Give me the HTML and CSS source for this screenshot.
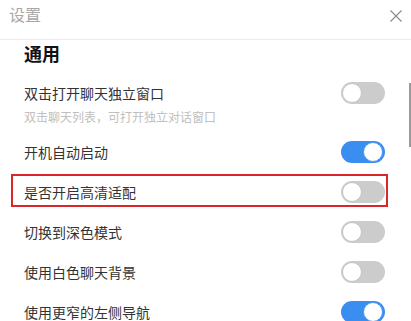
FILE: index.html
```html
<!DOCTYPE html>
<html lang="zh-CN">
<head>
<meta charset="utf-8">
<title>设置</title>
<link rel="stylesheet" href="styles.css">
</head>
<body>
<div class="window">
  <header class="header">
    <span class="header-title">设置</span>
    <svg class="close" width="12" height="12" viewBox="0 0 12 12"><path d="M0.5 0.5 L11.5 11.5 M11.5 0.5 L0.5 11.5" stroke="#8a8a8a" stroke-width="1.1" fill="none"/></svg>
  </header>
  <main class="content">
    <h2 class="section-title">通用</h2>
    <div class="row row-first">
      <div class="row-text">
        <div class="label">双击打开聊天独立窗口</div>
        <div class="hint">双击聊天列表，可打开独立对话窗口</div>
      </div>
      <span class="toggle"></span>
    </div>
    <div class="row">
      <div class="label">开机自动启动</div>
      <span class="toggle on"></span>
    </div>
    <div class="row highlighted">
      <div class="label">是否开启高清适配</div>
      <span class="toggle"></span>
    </div>
    <div class="row">
      <div class="label">切换到深色模式</div>
      <span class="toggle"></span>
    </div>
    <div class="row">
      <div class="label">使用白色聊天背景</div>
      <span class="toggle"></span>
    </div>
    <div class="row">
      <div class="label">使用更窄的左侧导航</div>
      <span class="toggle on"></span>
    </div>
  </main>
  <div class="scroll-thumb"></div>
</div>
</body>
</html>
```
FILE: styles.css
```css
html, body {
  margin: 0;
  padding: 0;
  background: #ffffff;
}
body {
  font-family: "Noto Sans CJK SC", "Noto Sans", sans-serif;
  color: #333333;
  overflow: hidden;
}
.window {
  position: relative;
  width: 411px;
  height: 321px;
  overflow: hidden;
}
.header {
  height: 39px;
  border-bottom: 1px solid #ebebeb;
  display: flex;
  justify-content: space-between;
  align-items: flex-start;
  padding: 0 9px 0 9px;
  box-sizing: content-box;
}
.header-title {
  font-size: 16px;
  line-height: 28px;
  color: #a8a8a8;
}
.close {
  margin-top: 10px;
  margin-right: 0;
}
.content {
  padding: 0 26px 0 24px;
}
.section-title {
  margin: 1px 0 0 0;
  font-size: 18px;
  line-height: 24px;
  font-weight: 700;
  color: #111111;
}
.row {
  position: relative;
  height: 40px;
  display: flex;
  align-items: center;
  justify-content: space-between;
}
.row-first {
  height: auto;
  margin-top: 18px;
  margin-bottom: 7px;
  align-items: flex-start;
}
.row-first .toggle {
  margin-top: -1px;
}
.label {
  font-size: 14px;
  line-height: 20px;
  color: #333333;
}
.hint {
  margin-top: 6px;
  font-size: 12px;
  line-height: 16px;
  color: #c0c0c0;
}
.highlighted::after {
  content: "";
  position: absolute;
  left: -13px;
  right: -3px;
  top: 2px;
  bottom: 5px;
  border: 2px solid #d8262b;
  pointer-events: none;
}
.toggle {
  position: relative;
  flex: none;
  width: 44px;
  height: 22px;
  border-radius: 11px;
  background: #cccccc;
  box-sizing: border-box;
}
.toggle::before {
  content: "";
  position: absolute;
  top: 1px;
  left: 1px;
  width: 20px;
  height: 20px;
  border-radius: 50%;
  background: #ffffff;
  box-sizing: border-box;
  border: 1px solid #c4c4c4;
}
.toggle.on {
  background: #3a8ef0;
}
.toggle.on::before {
  left: auto;
  right: 2px;
  top: 1px;
  border-color: #4b97f0;
}
.scroll-thumb {
  position: absolute;
  left: 409px;
  top: 83px;
  width: 2px;
  height: 64px;
  background: #9a9a9a;
}
```
